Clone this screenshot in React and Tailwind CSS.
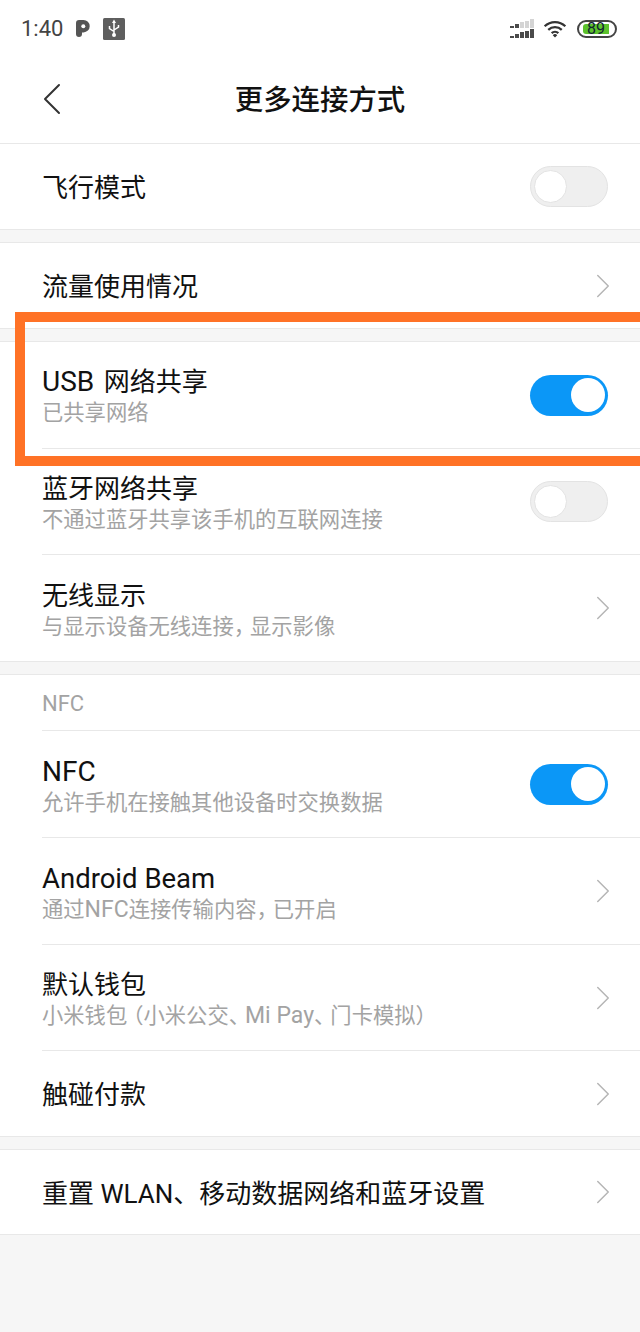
import { ChevronLeft, ChevronRight } from 'lucide-react';

const FONT = "font-['Roboto','Noto_Sans_CJK_SC',sans-serif]";

function Toggle({ on }) {
  if (on) {
    return (
      <div className="flex h-[41px] w-[78px] items-center justify-end rounded-full bg-[#0b97f7] pr-[3px]">
        <div className="h-[34px] w-[34px] rounded-full bg-white" />
      </div>
    );
  }
  return (
    <div className="flex h-[41px] w-[78px] items-center rounded-full border border-[#e3e3e3] bg-[#efefef] pl-[3px]">
      <div className="h-[33px] w-[33px] rounded-full border border-[#e3e3e3] bg-white" />
    </div>
  );
}

function Chevron() {
  return <ChevronRight size={42} strokeWidth={0.85} className="mr-[-16px] text-[#b5b5b5]" />;
}

function Row({ title, sub, right, h, divider, nudge }) {
  return (
    <div className={`ml-[42px] flex items-center justify-between pr-[32px] ${h} ${divider ? 'border-b border-[#e8e8e8]' : ''}`}>
      <div className={`min-w-0 ${nudge ? 'pt-[4px]' : 'pt-[2px]'}`}>
        <div className="text-[26px] leading-[34px] whitespace-nowrap text-[#111]">{title}</div>
        {sub && <div className="text-[21.3px] leading-[28px] whitespace-nowrap text-[#a3a3a3]">{sub}</div>}
      </div>
      {right}
    </div>
  );
}

function Latin({ children, size }) {
  return <span className={size}>{children}</span>;
}

// full-width punctuation sits tighter in the phone's font
function Punct({ children }) {
  return <span className="tracking-[-5px]">{children}</span>;
}

function SignalBars() {
  const heights = [2, 4, 6, 7.500, 9];
  return (
    <div className="flex flex-col gap-[1px]">
      {[0, 1].map((r) => (
        <div key={r} className="flex h-[9px] items-end gap-[1px]">
          {heights.map((b, i) => (
            <div
              key={i}
              className={`w-[4px] ${r === 0 && i > 1 ? 'bg-[#d4d4d4]' : 'bg-[#4a4a4a]'}`}
              style={{ height: b }}
            />
          ))}
        </div>
      ))}
    </div>
  );
}

export default function App() {
  return (
    <div className={`relative h-[1332px] w-[640px] overflow-hidden bg-[#f6f6f6] ${FONT}`}>
      {/* status bar + title */}
      <div className="bg-white">
        <div className="flex h-[57px] items-center justify-between pl-[21px] pr-[23px]">
          <div className="flex items-center">
            <span className="text-[22px] text-[#444]">1:40</span>
            <svg width="14" height="17" viewBox="0 0 14 17" className="ml-[13px]">
              <path d="M0 3A3 3 0 0 1 3 0H7.500a6 6 0 0 1 0 12.400H6V14a3 3 0 0 1-6 0Z" fill="#555" />
              <circle cx="7.300" cy="6.200" r="2" fill="#fff" />
            </svg>
            <svg width="22" height="22" viewBox="0 0 22 22" className="ml-[13px]">
              <rect width="22" height="22" rx="1.500" fill="#5e5e5e" />
              <path d="M11 3v14M11 13.500 6.500 10.500V8M11 12l4.500-3V7" stroke="#fff" strokeWidth="1.500" fill="none" />
              <circle cx="11" cy="17" r="2" fill="#fff" />
              <path d="M11 1.500 13 5H9Z" fill="#fff" />
            </svg>
          </div>
          <div className="flex items-center">
            <SignalBars />
            <svg width="24" height="18" viewBox="0 0 26 20" className="ml-[9px]">
              <path d="M1.500 7a16.500 16.500 0 0 1 23 0M5.500 11a10.800 10.800 0 0 1 15 0M9.300 14.600a5.300 5.300 0 0 1 7.400 0" stroke="#333" strokeWidth="2.500" fill="none" />
              <path d="M13 19.500l-2.500-2.600a3.400 3.400 0 0 1 5 0Z" fill="#333" />
            </svg>
            <div className="ml-[10px] flex h-[18px] w-[40px] items-center rounded-full border-2 border-[#444] pl-[4px]">
              <div className="flex h-[10px] w-[26px] items-center justify-center rounded-l-[3px] bg-[#5cc22c] text-[16px] leading-none text-[#123]">89</div>
            </div>
          </div>
        </div>
        <div className="relative flex h-[87px] items-center justify-center border-b border-[#e8e8e8] pt-[3px]">
          <ChevronLeft size={56} strokeWidth={0.85} className="absolute left-[24px] top-[14px] text-[#333]" />
          <span className="text-[28.4px] font-medium text-[#111]">更多连接方式</span>
        </div>
      </div>

      <div className="bg-white">
        <div className="ml-[42px] flex h-[85px] items-center justify-between pr-[32px]">
          <span className="pt-[4px] text-[26px] text-[#111]">飞行模式</span>
          <Toggle />
        </div>
      </div>
      <div className="h-[14px] border-y border-[#e8e8e8]" />

      <div className="bg-white">
        <Row title="流量使用情况" right={<Chevron />} h="h-[85px]" />
      </div>
      <div className="h-[14px] border-y border-[#e8e8e8]" />

      <div className="bg-white">
        <Row title={<><Latin size="mr-[3px] text-[28px]">USB</Latin> 网络共享</>} sub="已共享网络" right={<Toggle on />} h="h-[107px]" divider />
        <Row title="蓝牙网络共享" sub="不通过蓝牙共享该手机的互联网连接" right={<Toggle />} h="h-[106px]" divider />
        <Row title="无线显示" sub={<>与显示设备无线连接<Punct>，</Punct>显示影像</>} right={<Chevron />} h="h-[106px]" nudge />
      </div>
      <div className="h-[14px] border-y border-[#e8e8e8]" />

      <div className="bg-white">
        <div className="ml-[42px] flex h-[56px] items-center border-b border-[#e8e8e8] pt-[2px] text-[22px] text-[#a3a3a3]">NFC</div>
        <Row title={<Latin size="text-[28px]">NFC</Latin>} sub="允许手机在接触其他设备时交换数据" right={<Toggle on />} h="h-[107px]" divider nudge />
        <Row title={<Latin size="text-[27.5px]">Android Beam</Latin>} sub={<>通过<Latin size="text-[23px]">NFC</Latin>连接传输内容<Punct>，</Punct>已开启</>} right={<Chevron />} h="h-[107px]" divider nudge />
        <Row title="默认钱包" sub={<>小米钱<Punct>包</Punct>（小米公交<Punct>、</Punct><Latin size="text-[23px]">Mi Pay</Latin><Punct>、</Punct>门卡模拟）</>} right={<Chevron />} h="h-[106px]" divider />
        <Row title="触碰付款" right={<Chevron />} h="h-[85px]" />
      </div>
      <div className="h-[14px] border-y border-[#e8e8e8]" />

      <div className="border-b border-[#e8e8e8] bg-white">
        <Row title="重置 WLAN、移动数据网络和蓝牙设置" right={<Chevron />} h="h-[84px]" nudge />
      </div>

      {/* orange highlight over the USB row */}
      <div className="absolute left-[15px] top-[312px] h-[154px] w-[640px] border-[10px] border-[#ff7226]" />
    </div>
  );
}
